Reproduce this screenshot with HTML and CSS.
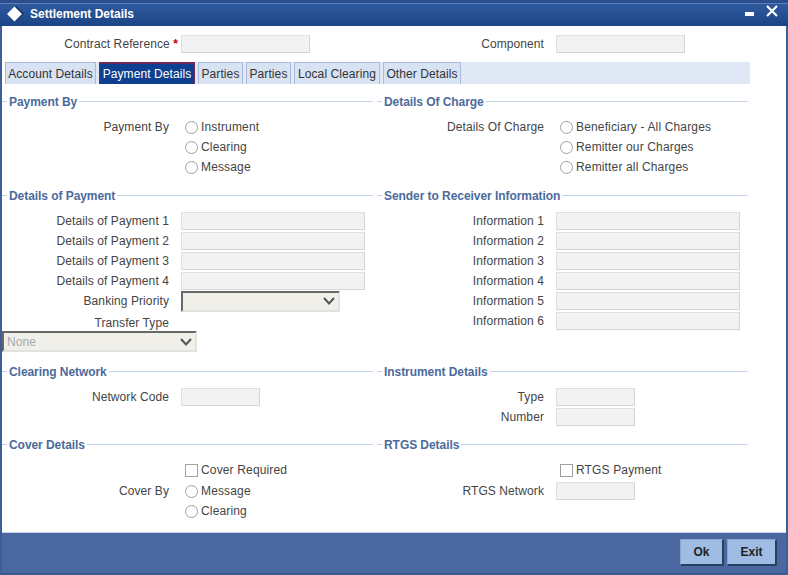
FILE: index.html
```html
<!DOCTYPE html>
<html lang="en">
<head>
<meta charset="utf-8">
<title>Settlement Details</title>
<link rel="stylesheet" href="styles.css">
</head>
<body>
<div class="window">
  <header class="titlebar">
    <svg class="logo" width="18" height="18" viewBox="0 0 18 18"><path d="M10 1 18 8.5 10 16 2 8.5Z" fill="#0f2c63"/><path d="M8.5 1.5 16 9 8.5 16.500 1 9Z" fill="#fff"/></svg>
    <span class="title">Settlement Details</span>
    <svg class="min" width="9" height="4" viewBox="0 0 9 4"><rect width="9" height="4" fill="#fff"/></svg>
    <svg class="close" width="12" height="12" viewBox="0 0 12 12"><path d="M1 1 11 11M11 1 1 11" stroke="#fff" stroke-width="2.2"/></svg>
  </header>
  <main class="content">
    <div class="top">
      <div class="field top-left"><label class="lbl">Contract Reference <b class="req">*</b></label><span class="inp w129"></span></div>
      <div class="field"><label class="lbl">Component</label><span class="inp w129"></span></div>
    </div>
    <nav class="tabs">
      <a class="tab">Account Details</a>
      <a class="tab active">Payment Details</a>
      <a class="tab">Parties</a>
      <a class="tab">Parties</a>
      <a class="tab">Local Clearing</a>
      <a class="tab">Other Details</a>
    </nav>
    <div class="sections">
      <section class="sec s1">
        <h3 class="legend"><span>Payment By</span></h3>
        <div class="field"><label class="lbl">Payment By</label><div class="opt"><input type="radio" name="a">Instrument</div></div>
        <div class="field"><label class="lbl"></label><div class="opt"><input type="radio" name="a">Clearing</div></div>
        <div class="field"><label class="lbl"></label><div class="opt"><input type="radio" name="a">Message</div></div>
      </section>
      <section class="sec s1">
        <h3 class="legend"><span>Details Of Charge</span></h3>
        <div class="field"><label class="lbl">Details Of Charge</label><div class="opt"><input type="radio" name="b">Beneficiary - All Charges</div></div>
        <div class="field"><label class="lbl"></label><div class="opt"><input type="radio" name="b">Remitter our Charges</div></div>
        <div class="field"><label class="lbl"></label><div class="opt"><input type="radio" name="b">Remitter all Charges</div></div>
      </section>
      <section class="sec s2">
        <h3 class="legend"><span>Details of Payment</span></h3>
        <div class="field"><label class="lbl">Details of Payment 1</label><span class="inp w184"></span></div>
        <div class="field"><label class="lbl">Details of Payment 2</label><span class="inp w184"></span></div>
        <div class="field"><label class="lbl">Details of Payment 3</label><span class="inp w184"></span></div>
        <div class="field"><label class="lbl">Details of Payment 4</label><span class="inp w184"></span></div>
        <div class="field"><label class="lbl">Banking Priority</label>
          <div class="select w159"><span></span><svg width="12" height="8" viewBox="0 0 12 8"><path d="M1 1 6 6.5 11 1" fill="none" stroke="#555" stroke-width="2"/></svg></div>
        </div>
        <div class="field transfer"><label class="lbl">Transfer Type</label></div>
        <div class="select w195 block"><span>None</span><svg width="12" height="8" viewBox="0 0 12 8"><path d="M1 1 6 6.5 11 1" fill="none" stroke="#555" stroke-width="2"/></svg></div>
      </section>
      <section class="sec s2">
        <h3 class="legend"><span>Sender to Receiver Information</span></h3>
        <div class="field"><label class="lbl">Information 1</label><span class="inp w184"></span></div>
        <div class="field"><label class="lbl">Information 2</label><span class="inp w184"></span></div>
        <div class="field"><label class="lbl">Information 3</label><span class="inp w184"></span></div>
        <div class="field"><label class="lbl">Information 4</label><span class="inp w184"></span></div>
        <div class="field"><label class="lbl">Information 5</label><span class="inp w184"></span></div>
        <div class="field"><label class="lbl">Information 6</label><span class="inp w184"></span></div>
      </section>
      <section class="sec s3">
        <h3 class="legend"><span>Clearing Network</span></h3>
        <div class="field"><label class="lbl">Network Code</label><span class="inp w79"></span></div>
      </section>
      <section class="sec s3">
        <h3 class="legend"><span>Instrument Details</span></h3>
        <div class="field"><label class="lbl">Type</label><span class="inp w79"></span></div>
        <div class="field"><label class="lbl">Number</label><span class="inp w79"></span></div>
      </section>
      <section class="sec s4">
        <h3 class="legend"><span>Cover Details</span></h3>
        <div class="field tall"><label class="lbl"></label><div class="opt"><input type="checkbox">Cover Required</div></div>
        <div class="field"><label class="lbl">Cover By</label><div class="opt"><input type="radio" name="c">Message</div></div>
        <div class="field"><label class="lbl"></label><div class="opt"><input type="radio" name="c">Clearing</div></div>
      </section>
      <section class="sec s4">
        <h3 class="legend"><span>RTGS Details</span></h3>
        <div class="field tall"><label class="lbl"></label><div class="opt"><input type="checkbox">RTGS Payment</div></div>
        <div class="field"><label class="lbl">RTGS Network</label><span class="inp w79"></span></div>
      </section>
    </div>
  </main>
  <footer class="footer">
    <button class="btn ok" type="button">Ok</button>
    <button class="btn exit" type="button">Exit</button>
  </footer>
</div>
</body>
</html>
```
FILE: styles.css
```css
* { box-sizing: border-box; }
html, body { margin: 0; padding: 0; }
body {
  width: 788px;
  height: 575px;
  overflow: hidden;
  font-family: "Liberation Sans", Arial, sans-serif;
  font-size: 12px;
  letter-spacing: 0.09px;
  color: #444;
  background: #4a689f;
}
.window {
  width: 788px;
  height: 575px;
  display: flex;
  flex-direction: column;
  border-left: 2px solid #3d5e99;
  border-right: 2px solid #3d5e99;
  border-bottom: 2px solid #3a5a90;
}
.titlebar {
  height: 26px;
  margin-left: -2px;
  margin-right: -2px;
  flex: none;
  display: flex;
  align-items: center;
  padding: 2px 10px 0 6px;
  background: linear-gradient(#2a4e8e 0, #2a4e8e 3px, #5b82b8 3px, #5b82b8 4px, #2f5a9e 4px, #1b4485 100%);
  color: #fff;
}
.logo { flex: none; margin-right: 6px; }
.title { font-weight: bold; flex: 1; font-size: 12px; letter-spacing: 0; }
.min { flex: none; margin: 0 12px 0 0; }
.close { flex: none; margin: -7px 0 0 0; }
.content {
  flex: none;
  height: 507px;
  background: #fff;
  border-bottom: 1px solid #c5d3e8;
}
.top {
  display: grid;
  grid-template-columns: 375px 375px;
  padding-top: 8px;
  height: 36px;
}
.field {
  display: flex;
  align-items: center;
  height: 20px;
}
.lbl {
  flex: none;
  width: 167px;
  text-align: right;
  margin-right: 12px;
  white-space: nowrap;
}
.req { color: #c00; font-weight: bold; }
.top-left .lbl { margin-right: 3px; width: 176px; }
.inp {
  display: block;
  height: 18px;
  background: #f2f2f2;
  border: 1px solid #e0e0e0;
  border-bottom-color: #d4d4d4;
  border-right-color: #d4d4d4;
}
.w129 { width: 129px; }
.w184 { width: 184px; }
.w79 { width: 79px; }
.tabs {
  display: flex;
  gap: 3px;
  width: 745px;
  margin-left: 3px;
  height: 22px;
  background: #e0e8f5;
}
.tab {
  display: flex;
  align-items: center;
  justify-content: center;
  height: 22px;
  background: #d7e2f3;
  border: 1px solid #a8bbdb;
  border-bottom: 0;
  white-space: nowrap;
  color: #333;
}
.tab:nth-child(1) { width: 91px; }
.tab:nth-child(2) { width: 96px; }
.tab:nth-child(3), .tab:nth-child(4) { width: 45px; }
.tab:nth-child(5) { width: 86px; }
.tab:nth-child(6) { width: 78px; }
.tab.active {
  background: #0f3f90;
  color: #fff;
  border-color: #6d2a55;
  border-top-width: 2px;
}
.sections {
  display: grid;
  grid-template-columns: 375px 371px;
  padding-top: 8px;
}
.sec { min-width: 0; }
.s1 { height: 94px; }
.s2 { height: 176px; }
.s3 { height: 73px; }
.s4 { height: 90px; }
.legend {
  margin: 0 0 7px;
  height: 18px;
  display: flex;
  align-items: center;
  font-size: 12px;
  font-weight: bold;
  letter-spacing: -0.06px;
  color: #4c6a9c;
}
.legend span { padding-top: 2px; }
.legend::before,
.legend::after {
  content: "";
  height: 1px;
  background: #c5d3e8;
}
.legend::before { width: 5px; margin-right: 2px; }
.legend::after { flex: 1; margin-left: 2px; }
.sec:nth-child(odd) .legend { margin-right: 4px; }
.opt {
  display: flex;
  align-items: center;
  white-space: nowrap;
  margin-left: 4px;
  letter-spacing: 0.15px;
}
.opt input {
  appearance: none;
  -webkit-appearance: none;
  width: 13px;
  height: 13px;
  margin: 1px 3px 0 0;
  background: #fff;
  border: 1px solid #a0a0a0;
  flex: none;
}
.opt input[type="radio"] { border-radius: 50%; }
.tall { height: 20px; margin-bottom: 1px; }
.select {
  display: flex;
  align-items: center;
  justify-content: space-between;
  height: 21px;
  padding: 0 3px;
  background: #f0efe9;
  border: 2px solid #e2e2de;
  border-top-color: #686868;
  border-left-color: #686868;
  color: #aaa;
}
.w159 { width: 159px; }
.w195 { width: 195px; }
.block { margin-top: -2px; }
.transfer { height: 22px; padding-top: 2px; }
.footer {
  flex: 1;
  display: flex;
  justify-content: flex-end;
  align-items: flex-start;
  gap: 3px;
  padding: 6px 9px 0 0;
  background: #4a689f;
}
.btn {
  height: 27px;
  padding: 0;
  background: #9fbce3;
  border: 1px solid #8aa6cf;
  border-right: 2px solid #2b3f63;
  border-bottom: 2px solid #2b3f63;
  font: bold 12px "Liberation Sans", Arial, sans-serif;
  color: #222;
}
.ok { width: 44px; }
.exit { width: 50px; }
```
